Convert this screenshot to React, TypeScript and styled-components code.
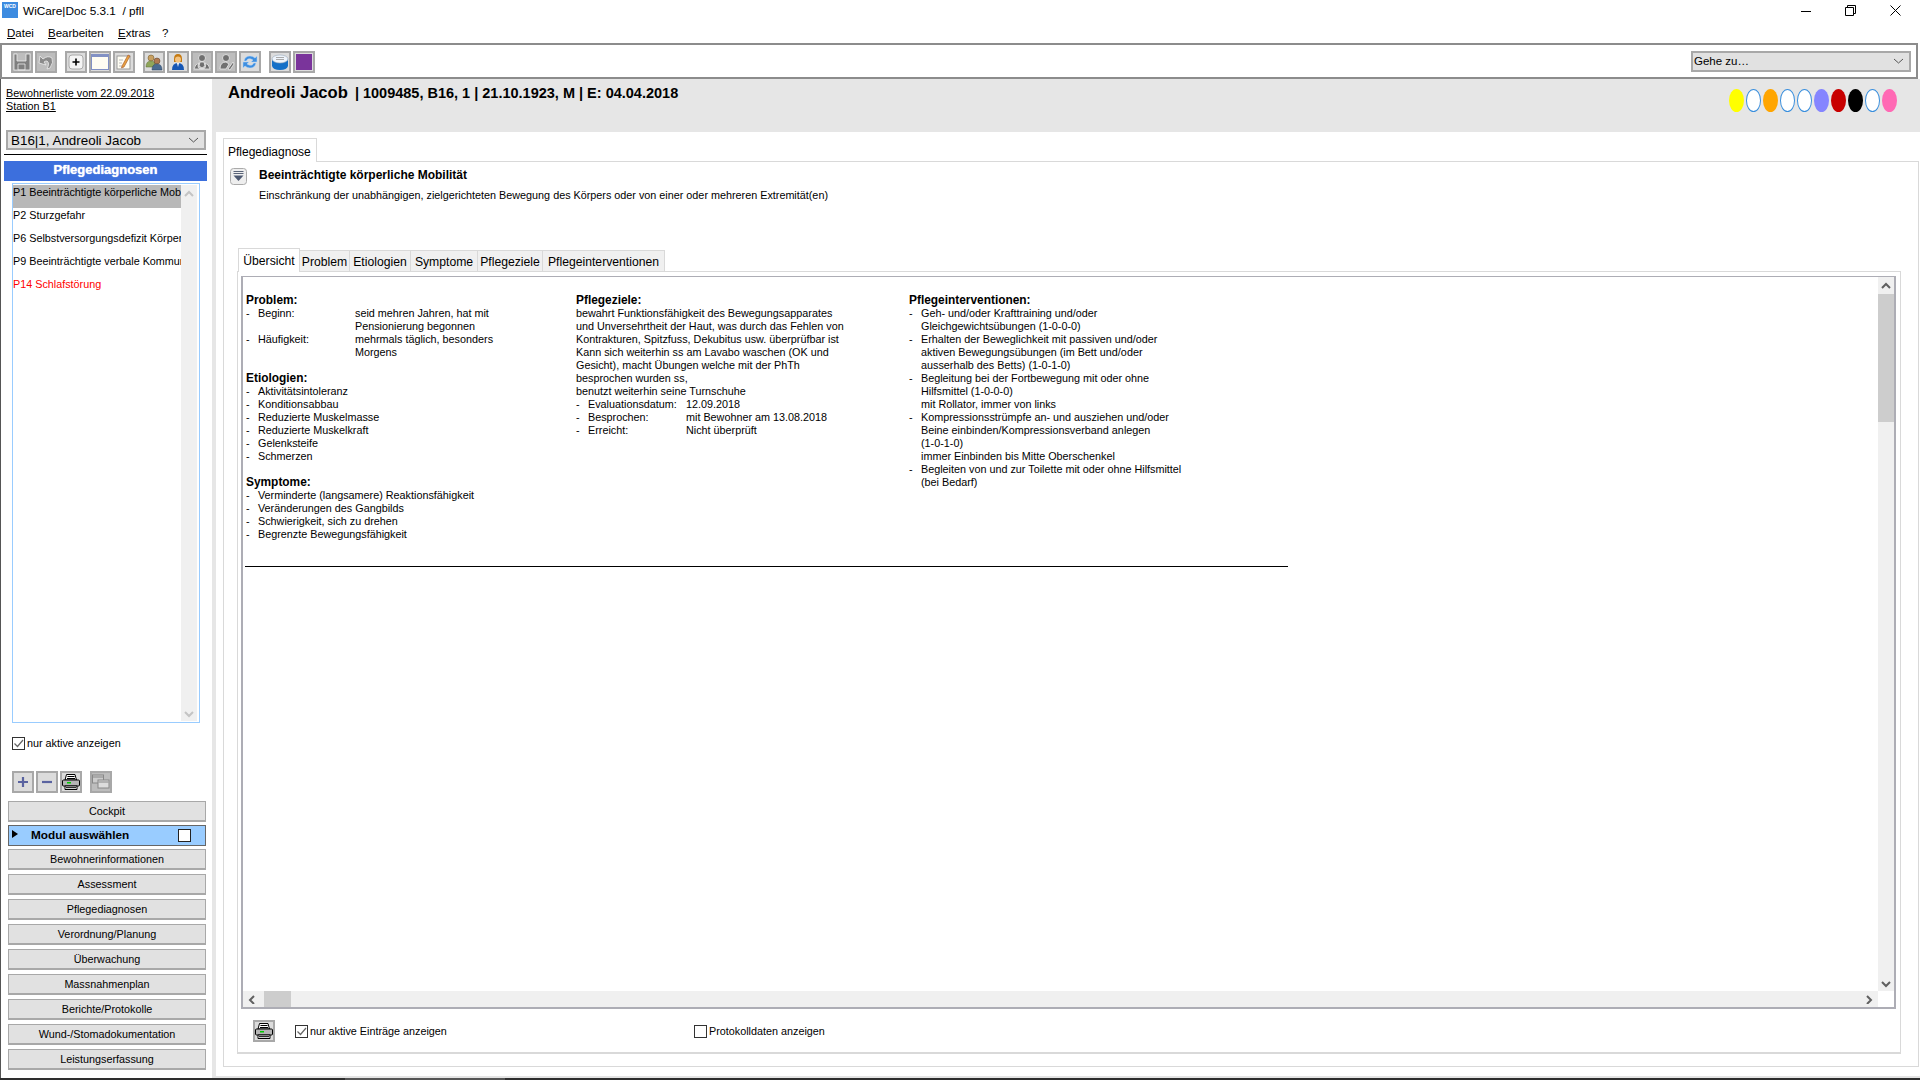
import React from "react";
import styled, { createGlobalStyle } from "styled-components";

const UI = `"Liberation Sans", Arial, sans-serif`;

const Global = createGlobalStyle`
  html, body { margin: 0; padding: 0; background: #fff; overflow: hidden; }
  #root { width: 1920px; height: 1080px; overflow: hidden; }
  * { box-sizing: border-box; }
`;

const Page = styled.div`
  width: 1920px; height: 1080px; display: flex; flex-direction: column;
  font: 10.8px/13px ${UI}; color: #000; background: #fff;
`;
const TaskStrip = styled.div`height: 2px; flex: none; background: #2e2e2e; display: flex;`;
const TaskItem = styled.div`width: 160px; margin-left: 345px; background: #555;`;
const TitleBar = styled.div`
  height: 23px; display: flex; align-items: center; padding: 0 2px 0 2px; font-size: 11.8px;
`;
const AppIcon = styled.div`
  width: 16px; height: 16px; background: #3d8be0; color: #fff; font: bold 5px/8px ${UI};
  text-align: center; margin-right: 5px; margin-top: -3px;
`;
const TitleText = styled.span`flex: 1; white-space: pre;`;
const WinButton = styled.div`
  width: 45px; height: 22px; display: flex; align-items: center; justify-content: center; margin-top: -2px;
`;
const MenuBar = styled.div`
  height: 20px; display: flex; align-items: center; padding-left: 7px; font-size: 11.5px;
`;
const MenuItem = styled.span<{ $w: number }>`
  width: ${p => p.$w}px;
  &::first-letter { text-decoration: underline; }
`;
const Toolbar = styled.div`
  height: 36px; border: 2px solid #8c8c8c; margin-right: 2px;
  display: flex; align-items: center; padding: 0 5px 0 9px; background: #fff;
`;
const ToolGroup = styled.div`display: flex; gap: 2px; margin: 1px 8px 0 0;`;
const ToolButton = styled.div<{ $off?: boolean; $s?: number }>`
  width: ${p => p.$s ?? 22}px; height: ${p => p.$s ?? 22}px; border: 2px solid #a8a8a8;
  background: ${p => (p.$off ? "#bdbdbd" : "#dcdcdc")};
  display: flex; align-items: center; justify-content: center; flex: none;
`;
const GapButton = styled(ToolButton)`margin-left: 6px;`;
const PrintButton = styled(ToolButton)`margin-right: 20px;`;
const Spacer = styled.div`flex: 1;`;
const Combo = styled.div<{ $w: number; $big?: boolean }>`
  width: ${p => p.$w}px; height: ${p => (p.$big ? 20 : 21)}px; border: 2px solid #a8a8a8; background: #e1e1e1;
  display: flex; align-items: center; justify-content: space-between; padding: 0 5px 0 ${p => (p.$big ? 3 : 1)}px;
  font-size: ${p => (p.$big ? 13.4 : 11.5)}px;
`;

const Body = styled.div`flex: 1; display: flex; min-height: 0;`;
const Sidebar = styled.div`
  width: 212px; flex: none; border-left: 1px solid #555; display: flex; flex-direction: column;
`;
const ResidentLink = styled.div`
  margin: 8px 0 0 5px; text-decoration: underline; height: 26px;
`;
const SideCombo = styled(Combo)`margin: 17px 0 0 5px;`;
const Rule = styled.div`height: 1px; background: #000; margin: 4px 5px 0 3px;`;
const SideHeading = styled.div`
  height: 20px; margin: 6px 5px 0 3px; background: #3c6fdd; color: #fff; font: bold 13px/18px ${UI};
  text-align: center; text-shadow: 0 0 1px #fff;
`;
const DiagnosisList = styled.div`
  height: 540px; width: 188px; margin: 2px 0 0 11px; border: 1px solid #99ccff; padding: 1px 0;
  display: flex;
`;
const ListRows = styled.div`width: 168px; overflow: hidden;`;
const ListRow = styled.div<{ $sel?: boolean; $red?: boolean }>`
  height: 23px; line-height: 14px; white-space: nowrap; overflow: hidden;
  background: ${p => (p.$sel ? "#b8b8b8" : "transparent")};
  color: ${p => (p.$red ? "#ff0000" : "#000")};
`;
const ListScroll = styled.div`
  width: 16px; background: #f0f0f0; display: flex; flex-direction: column; justify-content: space-between;
  align-items: center; padding: 4px 0 2px;
`;
const CheckRow = styled.label<{ $m?: string; $w?: number }>`
  display: flex; align-items: center; height: 13px; margin: ${p => p.$m ?? "0"};
  ${p => (p.$w ? `width: ${p.$w}px;` : "")}
`;
const Box = styled.span`
  width: 13px; height: 13px; border: 1px solid #333; background: #fff; margin-right: 2px; flex: none;
  display: flex; align-items: center; justify-content: center;
`;
const SmallButtons = styled.div`display: flex; gap: 2px; margin: 21px 0 0 11px;`;
const Nav = styled.div`display: flex; flex-direction: column; margin: 8px 6px 0 7px;`;
const NavButton = styled.div<{ $gap: number }>`
  height: 21px; margin-top: ${p => p.$gap}px; background: #e1e1e1; border: 1px solid #a8a8a8;
  border-width: 1px 1px 2px 1px; text-align: center; line-height: 19px;
`;
const NavSelect = styled.div`
  height: 21px; margin-top: 3px; background: #99ccff; border: 1px solid #666; display: flex;
  align-items: center; font: bold 11.8px/13px ${UI}; position: relative; padding-left: 22px;
  justify-content: space-between; padding-right: 14px;
  &::before {
    content: ""; position: absolute; left: 3px; top: 4px; border-left: 6px solid #000;
    border-top: 4px solid transparent; border-bottom: 4px solid transparent;
  }
`;
const WhiteBox = styled.span`width: 13px; height: 13px; background: #fff; border: 1px solid #222;`;

const Main = styled.div`flex: 1; min-width: 0; display: flex; flex-direction: column;`;
const Patient = styled.div`
  height: 53px; background: #e6e6e6; display: flex; padding: 4px 23px 0 16px;
`;
const PatientName = styled.span`font: bold 16.6px/20px ${UI};`;
const PatientInfo = styled.span`font: bold 14.5px/20px ${UI}; margin-left: 7px; flex: 1;`;
const Ovals = styled.div`display: flex; gap: 2px; margin-top: 6px; height: 23px;`;
const Oval = styled.span<{ $c?: string }>`
  width: 15px; height: 23px; border-radius: 50%;
  background: ${p => p.$c ?? "#fff"};
  border: ${p => (p.$c ? "none" : "1px solid #3a8fdd")};
`;
const Content = styled.div`
  flex: 1; min-height: 0; border-left: 4px solid #e6e6e6; border-bottom: 2px solid #e4e4e4;
  padding: 6px 1px 9px 7px; display: flex; flex-direction: column; background: #fff;
`;
const OuterTab = styled.div`
  width: 94px; height: 24px; border: 1px solid #d9d9d9; border-bottom: none; padding: 7px 0 0 4px;
  font-size: 12px; background: #fff; margin-bottom: -1px; position: relative; z-index: 1;
`;
const OuterBody = styled.div`
  flex: 1; min-height: 0; border: 1px solid #d9d9d9; display: flex; flex-direction: column;
  padding: 6px 17px 0 6px;
`;
const DiagHead = styled.div`display: flex; height: 80px;`;
const DiagIcon = styled.div`width: 29px; flex: none;`;
const DiagText = styled.div`padding-top: 1px;`;
const DiagTitle = styled.div`font: bold 12px/13px ${UI}; margin-bottom: 7px;`;
const InnerTabs = styled.div`
  display: flex; align-items: flex-end; height: 24px; margin: 0 0 -1px 8px; position: relative; z-index: 1;
`;
const InnerTab = styled.div<{ $w: number; $on?: boolean }>`
  width: ${p => p.$w}px; height: ${p => (p.$on ? 24 : 22)}px; border: 1px solid #d9d9d9;
  border-bottom: ${p => (p.$on ? "none" : "1px solid #d9d9d9")};
  border-left: ${p => (p.$on ? "1px solid #d9d9d9" : "none")};
  background: ${p => (p.$on ? "#fff" : "#f0f0f0")}; font-size: 12.2px; text-align: center;
  line-height: ${p => (p.$on ? 24 : 22)}px;
`;
const InnerPanel = styled.div`
  margin-left: 7px; height: 783px; border: 1px solid #d9d9d9; border-bottom-width: 2px;
  padding: 4px 4px 0 3px; display: flex; flex-direction: column;
`;
const ScrollView = styled.div`
  height: 733px; border: 1px solid #adadb5; border-width: 1px 2px 2px 2px; display: flex; flex-direction: column;
`;
const ScrollMain = styled.div`flex: 1; min-height: 0; display: flex;`;
const Doc = styled.div`flex: 1; padding: 17px 0 0 2px;`;
const DocBlock = styled.div`
  width: 1043px; height: 273px; border-bottom: 1px solid #000;
  display: grid; grid-template-columns: 330px 333px 1fr;
`;
const Column = styled.div`padding-left: 1px; white-space: nowrap;`;
const H = styled.div`font-weight: bold; font-size: 11.9px; height: 13px;`;
const Gap = styled.div`height: 13px;`;
const Bullet = styled.div<{ $lab?: number }>`
  display: grid; grid-template-columns: 12px ${p => (p.$lab ? `${p.$lab}px` : "")} 1fr; white-space: pre-line;
`;
const Plain = styled.div`white-space: pre-line;`;
const VBar = styled.div`
  width: 16px; background: #f0f0f0; display: flex; flex-direction: column; align-items: center;
  justify-content: space-between; padding: 4px 0 2px; position: relative;
`;
const VThumb = styled.div`
  position: absolute; left: 0; right: 0; top: 17px; height: 128px; background: #cdcdcd;
`;
const HRow = styled.div`display: flex;`;
const HBar = styled.div`
  height: 16px; flex: 1; background: #f0f0f0; display: flex; align-items: center; padding: 0 4px 0 5px;
`;
const HThumb = styled.div`width: 27px; height: 16px; background: #cdcdcd; margin-left: 6px;`;
const Corner = styled.div`width: 16px; height: 16px; background: #fff;`;
const BottomRow = styled.div`display: flex; align-items: center; padding: 11px 0 0 12px;`;

const Chevron = ({ dir, pale }: { dir: "u" | "d" | "l" | "r"; pale?: boolean }) => {
  const d = { u: "M1 6 L5 2 L9 6", d: "M1 2 L5 6 L9 2", l: "M6 1 L2 5 L6 9", r: "M3 1 L7 5 L3 9" }[dir];
  return (
    <svg width="10" height="10" viewBox="0 0 10 8" style={{ flex: "none" }}>
      <path d={d} fill="none" stroke={pale ? "#c4c4c4" : "#606060"} strokeWidth="2" />
    </svg>
  );
};

const ComboArrow = () => (
  <svg width="11" height="6" viewBox="0 0 11 6"><path d="M1 1 L5.5 5 L10 1" fill="none" stroke="#555" strokeWidth="1" /></svg>
);
const Check = () => (
  <svg width="11" height="11" viewBox="0 0 11 11"><path d="M1.5 5.5 L4.5 8.5 L10 2" fill="none" stroke="#666" strokeWidth="1.2" /></svg>
);
const Printer = () => (
  <svg width="18" height="16" viewBox="0 0 18 16">
    <path d="M4.5 0.5 H13 L14.5 6 H3 Z" fill="#fff" stroke="#000" />
    <path d="M5.5 2.5 H12.5 M5 4.5 H13" stroke="#000" />
    <rect x="0.5" y="6" width="17" height="6" rx="1" fill="#b5b5b5" stroke="#000" />
    <rect x="5" y="8" width="4" height="1.5" fill="#0c0" />
    <path d="M3 12 H15 V15.5 H3 Z" fill="#fff" stroke="#000" />
    <path d="M4 13.7 H14" stroke="#000" />
  </svg>
);
const Disk = () => (
  <svg width="18" height="18" viewBox="0 0 18 18">
    <path d="M1 1 H4 V8 H13 V1 H17 V17 H1 Z M5 11 H12 V17 H5 Z" fill="#7f7f7f" stroke="#ececec" strokeWidth="0.8" />
  </svg>
);
const Undo = () => (
  <svg width="18" height="18" viewBox="0 0 18 18">
    <path d="M2 10 L3 3 L6 6 Q11 2 15 5 Q17 9 13 15 L10 16 Q13 10 10 8 Q8 8 7 9 L9 12 Z" fill="#8a8a8a" stroke="#ececec" strokeWidth="0.8" />
  </svg>
);
const PlusKey = () => (
  <svg width="16" height="16" viewBox="0 0 16 16">
    <rect x="1" y="1" width="14" height="14" rx="3" fill="#f4f4f4" stroke="#aaa" />
    <path d="M4.5 8 H11.5 M8 4.5 V11.5" stroke="#000" strokeWidth="1.6" />
  </svg>
);
const WindowIcon = () => (
  <svg width="18" height="16" viewBox="0 0 18 16">
    <rect x="0.5" y="0.5" width="17" height="15" fill="#fffdf2" stroke="#8291c4" />
    <rect x="1" y="1" width="16" height="2" fill="#8291c4" />
  </svg>
);
const Note = () => (
  <svg width="18" height="18" viewBox="0 0 18 18">
    <rect x="2" y="3" width="13" height="13" fill="#fffef4" stroke="#999" />
    <path d="M4 7 H8 M4 10 H7 M4 13 H7" stroke="#bbb" />
    <path d="M7 13 L13 2 L15 3 L9 14 L6.5 15 Z" fill="#e8a23c" stroke="#a0522d" strokeWidth="0.6" />
  </svg>
);
const People = () => (
  <svg width="18" height="18" viewBox="0 0 18 18">
    <circle cx="6" cy="5" r="3" fill="#c8a062" stroke="#6b5320" strokeWidth=".5" />
    <path d="M1 14 Q1 8 6 8 Q11 8 10 14 Z" fill="#8fa65a" stroke="#5b6b30" strokeWidth=".5" />
    <circle cx="12" cy="8" r="3" fill="#b07a50" stroke="#5a3a20" strokeWidth=".5" />
    <path d="M7 17 Q7 11 12 11 Q17 11 17 17 Z" fill="#4a6b90" stroke="#2a4060" strokeWidth=".5" />
  </svg>
);
const Person = () => (
  <svg width="18" height="18" viewBox="0 0 18 18">
    <path d="M5 6 Q5 1 9 1 Q13 1 13 6 L13 9 H5 Z" fill="#c57a12" />
    <circle cx="9" cy="6.5" r="3" fill="#f4c27e" />
    <path d="M3 17 Q3 10 9 10 Q15 10 15 17 Z" fill="#1657b5" />
    <path d="M8 10 H10 L9 14 Z" fill="#fff" />
  </svg>
);
const GreyPeople = ({ pen }: { pen?: boolean }) => (
  <svg width="18" height="18" viewBox="0 0 18 18">
    <circle cx="9" cy="5" r="3.5" fill="#707070" stroke="#ececec" strokeWidth=".8" />
    {pen ? (
      <path d="M3 16 Q3 9 9 9 L12 11 L9 16 Z M11 16 L16 9 L17 11 L13 17 Z" fill="#707070" stroke="#ececec" strokeWidth=".8" />
    ) : (
      <path d="M1 16 Q2 11 6 10 Q3 16 9 16 Q14 16 12 10 Q16 11 17 16 Z M7 9 H11 L12 13 L9 15 L6 13 Z" fill="#707070" stroke="#ececec" strokeWidth=".8" />
    )}
  </svg>
);
const Refresh = () => (
  <svg width="18" height="18" viewBox="0 0 18 18">
    <path d="M3 8 Q4 3 9 3 Q12 3 14 5 L16 3 V9 H10 L12 7 Q9 5 7 6 Q5.5 7 5.5 8 Z" fill="#3f8fe0" stroke="#b8d8f8" strokeWidth=".5" />
    <path d="M15 10 Q14 15 9 15 Q6 15 4 13 L2 15 V9 H8 L6 11 Q9 13 11 12 Q12.5 11 12.5 10 Z" fill="#3f8fe0" stroke="#b8d8f8" strokeWidth=".5" />
  </svg>
);
const Bucket = () => (
  <svg width="18" height="18" viewBox="0 0 18 18">
    <path d="M1 6 V13 Q2 17 9 17 Q16 17 17 13 V6 Z" fill="#1470c8" />
    <ellipse cx="9" cy="6" rx="8" ry="4" fill="#eef4fb" stroke="#9ab" strokeWidth=".6" />
    <path d="M5 4.5 H13 M5 6.5 H13" stroke="#aaa" />
  </svg>
);
const Swatch = styled.span`width: 16px; height: 16px; background: #7a349b;`;
const Plus = () => (
  <svg width="14" height="14" viewBox="0 0 14 14"><path d="M2 7 H12 M7 2 V12" stroke="#5a63a0" strokeWidth="2.2" /></svg>
);
const Minus = () => (
  <svg width="14" height="14" viewBox="0 0 14 14"><path d="M2 7 H12" stroke="#5a63a0" strokeWidth="2.2" /></svg>
);
const Windows = () => (
  <svg width="18" height="16" viewBox="0 0 18 16">
    <rect x="0.5" y="1" width="11" height="8" fill="#ccc" stroke="#888" />
    <path d="M1 3 H11" stroke="#888" />
    <rect x="6" y="6" width="11" height="8" fill="#ddd" stroke="#888" />
    <path d="M6.5 8 H16.5" stroke="#888" />
  </svg>
);
const FilterIcon = () => (
  <svg width="17" height="17" viewBox="0 0 17 17">
    <rect x="0.5" y="0.5" width="16" height="16" rx="3" fill="#eee" stroke="#aaa" />
    <path d="M3.5 3.5 H13.5 M3.5 5.5 H13.5" stroke="#5a6478" strokeWidth="1.2" />
    <path d="M3.5 7.5 H13.5 L8.5 13 Z" fill="#4c5870" />
  </svg>
);

const list = [
  "P1 Beeinträchtigte körperliche Mobilität",
  "P2 Sturzgefahr",
  "P6 Selbstversorgungsdefizit Körperpflege",
  "P9 Beeinträchtigte verbale Kommunikation",
];
const nav: [string, number][] = [
  ["Bewohnerinformationen", 3], ["Assessment", 4], ["Pflegediagnosen", 4], ["Verordnung/Planung", 4],
  ["Überwachung", 4], ["Massnahmenplan", 4], ["Berichte/Protokolle", 4], ["Wund-/Stomadokumentation", 4], ["Leistungserfassung", 4],
];
const ovals = ["#ffff00", "", "#ffa500", "", "", "#8585ff", "#c80000", "#000000", "", "#ff69b4"];
const inner: [string, number][] = [["Problem", 50], ["Etiologien", 61], ["Symptome", 67], ["Pflegeziele", 65], ["Pflegeinterventionen", 122]];

const B = ({ children }: { children: React.ReactNode }) => (
  <Bullet><span>-</span><span>{children}</span></Bullet>
);
const L = ({ l, children, w = 97 }: { l: string; children: React.ReactNode; w?: number }) => (
  <Bullet $lab={w}><span>-</span><span>{l}</span><span>{children}</span></Bullet>
);

export default function App() {
  return (
    <Page>
      <Global />
      <TitleBar>
        <AppIcon>WCD</AppIcon>
        <TitleText>WiCare|Doc 5.3.1  / pfll</TitleText>
        <WinButton>
          <svg width="10" height="10" viewBox="0 0 10 10"><path d="M0 5.5 H10" stroke="#000" /></svg>
        </WinButton>
        <WinButton>
          <svg width="11" height="11" viewBox="0 0 11 11"><path d="M0.5 2.5 H8.5 V10.5 H0.5 Z M2.5 2.5 V0.5 H10.5 V8.5 H8.5" fill="none" stroke="#000" /></svg>
        </WinButton>
        <WinButton>
          <svg width="11" height="11" viewBox="0 0 11 11"><path d="M0.5 0.5 L10.5 10.5 M10.5 0.5 L0.5 10.5" stroke="#000" /></svg>
        </WinButton>
      </TitleBar>
      <MenuBar>
        <MenuItem $w={41}>Datei</MenuItem>
        <MenuItem $w={70}>Bearbeiten</MenuItem>
        <MenuItem $w={44}>Extras</MenuItem>
        <MenuItem $w={10}>?</MenuItem>
      </MenuBar>
      <Toolbar>
        <ToolGroup>
          <ToolButton $off><Disk /></ToolButton>
          <ToolButton $off><Undo /></ToolButton>
        </ToolGroup>
        <ToolGroup>
          <ToolButton><PlusKey /></ToolButton>
          <ToolButton><WindowIcon /></ToolButton>
          <ToolButton><Note /></ToolButton>
        </ToolGroup>
        <ToolGroup>
          <ToolButton><People /></ToolButton>
          <ToolButton><Person /></ToolButton>
          <ToolButton $off><GreyPeople /></ToolButton>
          <ToolButton $off><GreyPeople pen /></ToolButton>
          <ToolButton><Refresh /></ToolButton>
        </ToolGroup>
        <ToolGroup>
          <ToolButton><Bucket /></ToolButton>
          <ToolButton><Swatch /></ToolButton>
        </ToolGroup>
        <Spacer />
        <Combo $w={220}>Gehe zu…<ComboArrow /></Combo>
      </Toolbar>
      <Body>
        <Sidebar>
          <ResidentLink>Bewohnerliste vom 22.09.2018<br />Station B1</ResidentLink>
          <SideCombo $w={200} $big>B16|1, Andreoli Jacob<ComboArrow /></SideCombo>
          <Rule />
          <SideHeading>Pflegediagnosen</SideHeading>
          <DiagnosisList>
            <ListRows>
              {list.map((t, i) => <ListRow key={t} $sel={i === 0}>{t}</ListRow>)}
              <ListRow $red>P14 Schlafstörung</ListRow>
            </ListRows>
            <ListScroll><Chevron dir="u" pale /><Chevron dir="d" pale /></ListScroll>
          </DiagnosisList>
          <CheckRow $m="14px 0 0 11px"><Box><Check /></Box>nur aktive anzeigen</CheckRow>
          <SmallButtons>
            <ToolButton><Plus /></ToolButton>
            <ToolButton><Minus /></ToolButton>
            <ToolButton><Printer /></ToolButton>
            <GapButton $off><Windows /></GapButton>
          </SmallButtons>
          <Nav>
            <NavButton $gap={0}>Cockpit</NavButton>
            <NavSelect>Modul auswählen<WhiteBox /></NavSelect>
            {nav.map(([t, g]) => <NavButton key={t} $gap={g}>{t}</NavButton>)}
          </Nav>
        </Sidebar>
        <Main>
          <Patient>
            <PatientName>Andreoli Jacob</PatientName>
            <PatientInfo>| 1009485, B16, 1 | 21.10.1923, M | E: 04.04.2018</PatientInfo>
            <Ovals>{ovals.map((c, i) => <Oval key={i} $c={c || undefined} />)}</Ovals>
          </Patient>
          <Content>
            <OuterTab>Pflegediagnose</OuterTab>
            <OuterBody>
              <DiagHead>
                <DiagIcon><FilterIcon /></DiagIcon>
                <DiagText>
                  <DiagTitle>Beeinträchtigte körperliche Mobilität</DiagTitle>
                  <div>Einschränkung der unabhängigen, zielgerichteten Bewegung des Körpers oder von einer oder mehreren Extremität(en)</div>
                </DiagText>
              </DiagHead>
              <InnerTabs>
                <InnerTab $w={62} $on>Übersicht</InnerTab>
                {inner.map(([t, w]) => <InnerTab key={t} $w={w}>{t}</InnerTab>)}
              </InnerTabs>
              <InnerPanel>
                <ScrollView>
                  <ScrollMain>
                    <Doc>
                      <DocBlock>
                        <Column>
                          <H>Problem:</H>
                          <L l="Beginn:">{"seid mehren Jahren, hat mit\nPensionierung begonnen"}</L>
                          <L l="Häufigkeit:">{"mehrmals täglich, besonders\nMorgens"}</L>
                          <Gap />
                          <H>Etiologien:</H>
                          <B>Aktivitätsintoleranz</B>
                          <B>Konditionsabbau</B>
                          <B>Reduzierte Muskelmasse</B>
                          <B>Reduzierte Muskelkraft</B>
                          <B>Gelenksteife</B>
                          <B>Schmerzen</B>
                          <Gap />
                          <H>Symptome:</H>
                          <B>Verminderte (langsamere) Reaktionsfähigkeit</B>
                          <B>Veränderungen des Gangbilds</B>
                          <B>Schwierigkeit, sich zu drehen</B>
                          <B>Begrenzte Bewegungsfähigkeit</B>
                        </Column>
                        <Column>
                          <H>Pflegeziele:</H>
                          <Plain>{"bewahrt Funktionsfähigkeit des Bewegungsapparates\nund Unversehrtheit der Haut, was durch das Fehlen von\nKontrakturen, Spitzfuss, Dekubitus usw. überprüfbar ist\nKann sich weiterhin ss am Lavabo waschen (OK und\nGesicht), macht Übungen welche mit der PhTh\nbesprochen wurden ss,\nbenutzt weiterhin seine Turnschuhe"}</Plain>
                          <L l="Evaluationsdatum:" w={98}>12.09.2018</L>
                          <L l="Besprochen:" w={98}>mit Bewohner am 13.08.2018</L>
                          <L l="Erreicht:" w={98}>Nicht überprüft</L>
                        </Column>
                        <Column>
                          <H>Pflegeinterventionen:</H>
                          <B>{"Geh- und/oder Krafttraining und/oder\nGleichgewichtsübungen (1-0-0-0)"}</B>
                          <B>{"Erhalten der Beweglichkeit mit passiven und/oder\naktiven Bewegungsübungen (im Bett und/oder\nausserhalb des Betts) (1-0-1-0)"}</B>
                          <B>{"Begleitung bei der Fortbewegung mit oder ohne\nHilfsmittel (1-0-0-0)\nmit Rollator, immer von links"}</B>
                          <B>{"Kompressionsstrümpfe an- und ausziehen und/oder\nBeine einbinden/Kompressionsverband anlegen\n(1-0-1-0)\nimmer Einbinden bis Mitte Oberschenkel"}</B>
                          <B>{"Begleiten von und zur Toilette mit oder ohne Hilfsmittel\n(bei Bedarf)"}</B>
                        </Column>
                      </DocBlock>
                    </Doc>
                    <VBar>
                      <Chevron dir="u" />
                      <VThumb />
                      <Chevron dir="d" />
                    </VBar>
                  </ScrollMain>
                  <HRow>
                    <HBar>
                      <Chevron dir="l" />
                      <HThumb />
                      <Spacer />
                      <Chevron dir="r" />
                    </HBar>
                    <Corner />
                  </HRow>
                </ScrollView>
                <BottomRow>
                  <PrintButton><Printer /></PrintButton>
                  <CheckRow $w={399}><Box><Check /></Box>nur aktive Einträge anzeigen</CheckRow>
                  <CheckRow><Box />Protokolldaten anzeigen</CheckRow>
                </BottomRow>
              </InnerPanel>
            </OuterBody>
          </Content>
        </Main>
      </Body>
      <TaskStrip><TaskItem /></TaskStrip>
    </Page>
  );
}
